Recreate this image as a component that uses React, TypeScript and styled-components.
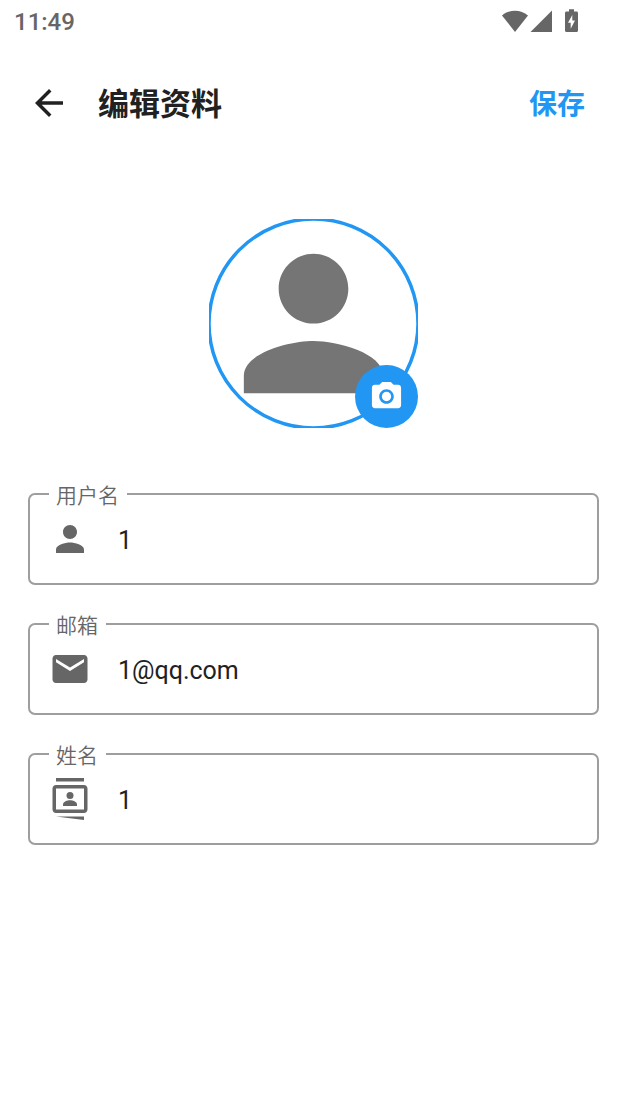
import React, { useState } from "react";
import styled, { createGlobalStyle } from "styled-components";

const GlobalStyle = createGlobalStyle`
  * { box-sizing: border-box; }
  body {
    margin: 0;
    background: #fff;
    color: #212121;
    font-family: Roboto, "Noto Sans CJK SC", sans-serif;
  }
`;

const Screen = styled.div`
  min-height: 100vh;
  display: flex;
  flex-direction: column;
`;

const StatusBar = styled.div`
  display: flex;
  justify-content: space-between;
  align-items: center;
  height: 44px;
  padding: 0 46px 0 14px;
  color: #666;
  font-size: 24px;
  line-height: 28px;
  font-weight: 500;
`;

const StatusIcons = styled.div`
  display: flex;
  align-items: center;
`;

const AppBar = styled.header`
  display: flex;
  align-items: center;
  height: 118px;
  padding: 0 28px;
`;

const BarButton = styled.button`
  display: flex;
  align-items: center;
  border: 0;
  background: none;
  cursor: pointer;
  padding: 0;
  color: #212121;
`;

const SaveButton = styled(BarButton)`
  padding: 4px 14px 0;
  color: #2196f3;
  font: inherit;
  font-size: 28px;
  line-height: 40px;
  font-weight: 700;
`;

const Title = styled.h1`
  flex: 1;
  margin: 0 0 0 28px;
  padding-top: 4px;
  font-size: 31px;
  line-height: 44px;
  font-weight: 700;
`;

const Main = styled.main`
  padding: 57px 28px 28px;
`;

const Avatar = styled.div`
  position: relative;
  width: 209px;
  height: 209px;
  margin: 0 auto 54px;
`;

const CameraButton = styled.button`
  position: absolute;
  right: 0;
  bottom: 0;
  display: flex;
  align-items: center;
  justify-content: center;
  width: 63px;
  height: 63px;
  padding: 0;
  border: 0;
  border-radius: 50%;
  background: #2196f3;
  color: #fff;
  cursor: pointer;
`;

const Form = styled.form`
  display: flex;
  flex-direction: column;
  gap: 27px;
`;

const Outline = styled.fieldset`
  min-width: 0;
  margin: 0;
  padding: 0 19px 11px;
  border: 2px solid #9e9e9e;
  border-radius: 7px;
`;

const Legend = styled.legend`
  padding: 4px 8px 0 7px;
  color: #666;
  font-size: 21px;
  line-height: 20px;
  font-weight: 350;
`;

const FieldRow = styled.div`
  display: flex;
  align-items: center;
  gap: 27px;
  height: 66px;
  color: #666;
`;

const Input = styled.input`
  flex: 1;
  min-width: 0;
  padding: 4px 0 0;
  border: 0;
  outline: 0;
  background: none;
  color: #212121;
  font: inherit;
  font-size: 25px;
  line-height: 36px;
`;

const Icon = ({ size = 42, children }: { size?: number; children: React.ReactNode }) => (
  <svg width={size} height={size} viewBox="0 0 24 24" fill="currentColor" aria-hidden="true">
    {children}
  </svg>
);

const personPath =
  "M12 12c2.21 0 4-1.79 4-4s-1.79-4-4-4-4 1.79-4 4 1.79 4 4 4zm0 2c-2.67 0-8 1.34-8 4v2h16v-2c0-2.66-5.33-4-8-4z";

const PersonIcon = () => (
  <Icon>
    <path d={personPath} />
  </Icon>
);

const EmailIcon = () => (
  <Icon>
    <path d="M20 4H4c-1.1 0-1.99.9-1.99 2L2 18c0 1.1.9 2 2 2h16c1.1 0 2-.9 2-2V6c0-1.1-.9-2-2-2zm0 4.2l-8 4.9-8-4.9V6.3l8 4.9 8-4.9z" />
  </Icon>
);

const ContactsIcon = () => (
  <Icon>
    <path d="M4 0h16v2H4zM4 22h16v2z" />
    <path
      fillRule="evenodd"
      d="M4 4h16c1.1 0 2 .9 2 2v12c0 1.1-.9 2-2 2H4c-1.1 0-2-.9-2-2V6c0-1.1.9-2 2-2zm0 2v12h16V6z"
    />
    <circle cx="12" cy="10" r="2" />
    <path d="M8 16v-.9c0-1.6 2.5-2.4 4-2.4s4 .8 4 2.4v.9z" />
  </Icon>
);

type FieldProps = { id: string; label: string; initial: string; type?: string; icon: React.ReactNode };

const Field = ({ id, label, initial, type = "text", icon }: FieldProps) => {
  const [value, setValue] = useState(initial);
  return (
    <Outline>
      <Legend>
        <label htmlFor={id}>{label}</label>
      </Legend>
      <FieldRow>
        {icon}
        <Input id={id} type={type} value={value} onChange={(e) => setValue(e.target.value)} />
      </FieldRow>
    </Outline>
  );
};

export default function App() {
  return (
    <Screen>
      <GlobalStyle />
      <StatusBar>
        <span>11:49</span>
        <StatusIcons>
          <svg width="79" height="26" viewBox="0 0 79 26" fill="currentColor" aria-hidden="true">
            <path d="M0 6.4C3.6 3.4 8.2 1.7 13 1.7s9.4 1.7 13 4.7L13 23z" />
            <path d="M50 1.5V23H28.5z" />
            <path
              fillRule="evenodd"
              d="M67 .2h5v2.3h2.5c.9 0 1.5.6 1.5 1.5v17.5c0 .9-.6 1.5-1.5 1.5h-10c-.9 0-1.5-.6-1.5-1.5V4c0-.9.6-1.5 1.5-1.5H67zM70.3 6l-4.3 7.7h2.7v6l4.3-8.2h-2.7z"
            />
          </svg>
        </StatusIcons>
      </StatusBar>
      <AppBar>
        <BarButton type="button" aria-label="返回">
          <Icon>
            <path d="M20 11H7.83l5.59-5.59L12 4l-8 8 8 8 1.41-1.41L7.83 13H20v-2z" />
          </Icon>
        </BarButton>
        <Title>编辑资料</Title>
        <SaveButton type="submit" form="profile">
          保存
        </SaveButton>
      </AppBar>
      <Main>
        <Avatar>
          <svg width="209" height="209" viewBox="0 0 24 24" aria-hidden="true">
            <circle cx="12" cy="12" r="12" fill="none" stroke="#2196f3" strokeWidth=".4" />
            <path d={personPath} fill="#757575" />
          </svg>
          <CameraButton type="button" aria-label="更换头像">
            <Icon size={35}>
              <path d="M9 2L7.17 4H4c-1.1 0-2 .9-2 2v12c0 1.1.9 2 2 2h16c1.1 0 2-.9 2-2V6c0-1.1-.9-2-2-2h-3.17L15 2H9zm3 15c-2.76 0-5-2.24-5-5s2.24-5 5-5 5 2.24 5 5-2.24 5-5 5z" />
              <circle cx="12" cy="12" r="3.2" />
            </Icon>
          </CameraButton>
        </Avatar>
        <Form id="profile" onSubmit={(e) => e.preventDefault()}>
          <Field id="username" label="用户名" initial="1" icon={<PersonIcon />} />
          <Field id="email" label="邮箱" initial="1@qq.com" type="email" icon={<EmailIcon />} />
          <Field id="fullname" label="姓名" initial="1" icon={<ContactsIcon />} />
        </Form>
      </Main>
    </Screen>
  );
}
